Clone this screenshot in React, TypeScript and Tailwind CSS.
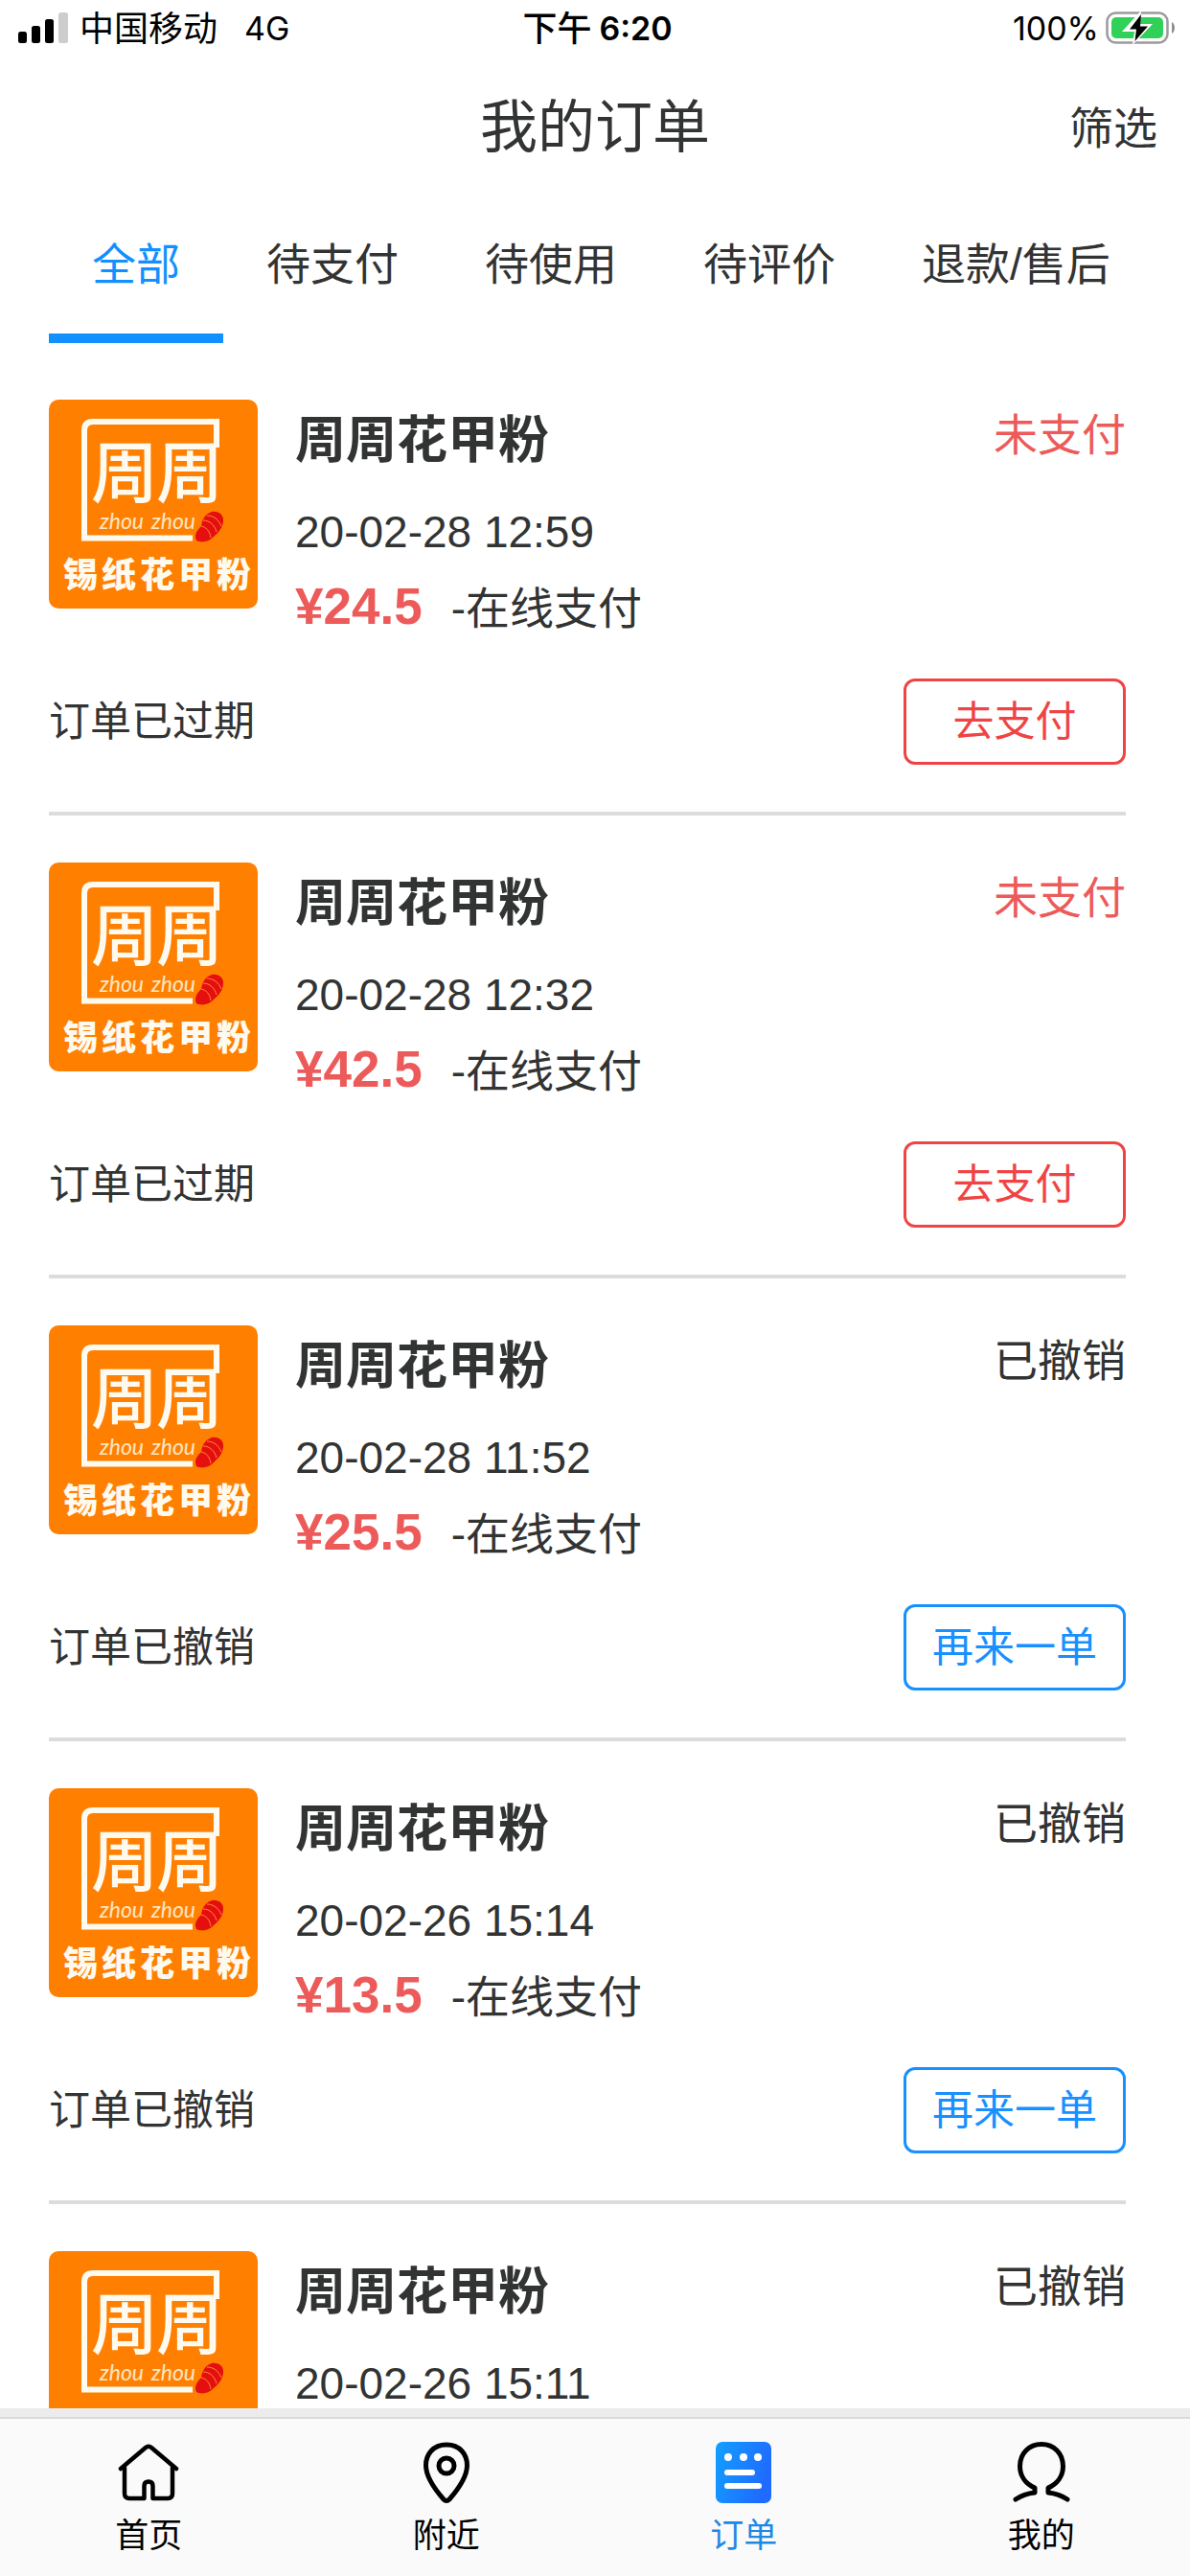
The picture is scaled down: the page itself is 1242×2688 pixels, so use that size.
import { useState } from 'react';
import clsx from 'clsx';

type Order = {
  id: number;
  time: string;
  price: string;
  state: 'unpaid' | 'cancelled';
};

const tabs = ['全部', '待支付', '待使用', '待评价', '退款/售后'];

const orders: Order[] = [
  { id: 1, time: '20-02-28 12:59', price: '24.5', state: 'unpaid' },
  { id: 2, time: '20-02-28 12:32', price: '42.5', state: 'unpaid' },
  { id: 3, time: '20-02-28 11:52', price: '25.5', state: 'cancelled' },
  { id: 4, time: '20-02-26 15:14', price: '13.5', state: 'cancelled' },
  { id: 5, time: '20-02-26 15:11', price: '13.5', state: 'cancelled' },
];

function StatusBar() {
  return (
    <div className="grid h-[60px] shrink-0 grid-cols-[1fr_auto_1fr] items-center pl-[19px] pr-[14px] font-['Inter','Noto_Sans_CJK_SC',sans-serif] text-[34px] leading-none text-black">
      <div className="flex items-center">
        <svg width="52" height="34" viewBox="0 0 52 34" aria-hidden="true">
          <rect x="0" y="20" width="9" height="12" rx="2.5" />
          <rect x="14" y="14" width="9" height="18" rx="2.5" />
          <rect x="28" y="7" width="9" height="25" rx="2.5" />
          <rect x="42" y="0" width="10" height="32" rx="2.5" fill="#cdcdcd" />
        </svg>
        <span className="ml-3 text-[36px]">中国移动</span>
        <span className="ml-7">4G</span>
      </div>
      <div className="flex items-center gap-2">
        <span className="text-[36px] font-medium">下午</span>
        <span className="font-semibold">6:20</span>
      </div>
      <div className="flex items-center justify-end gap-[7px]">
        <span>100%</span>
        <svg width="74" height="38" viewBox="0 0 74 38" aria-hidden="true">
          <rect x="1.5" y="2.5" width="63" height="31" rx="9" fill="#fff" stroke="#9b9b9b" strokeWidth="2.5" />
          <rect x="6" y="7" width="54" height="22" rx="5" fill="#2fd158" />
          <path d="M69 12c4 2 4 10 0 12z" fill="#8e8e8e" />
          <path d="M37 0 17 22h13l-2 14 21-22H36z" fill="#fff" />
          <path d="M37 4 25 19.500h7L30.500 32 44 16.500h-8z" fill="#000" />
        </svg>
      </div>
    </div>
  );
}

function ShopLogo() {
  return (
    <svg
      viewBox="0 0 218 218"
      role="img"
      aria-label="周周花甲粉"
      className="size-[218px] shrink-0 rounded-[10px] bg-[#ff8000]"
      fontFamily="'Noto Sans CJK SC', sans-serif"
      fill="#fffaf0"
    >
      <path
        d="M175 50V23H46q-9 0-9 9V144.500H150"
        fill="none"
        stroke="#fffaf0"
        strokeWidth="6"
      />
      <text x="79" y="102" fontSize="70" fontWeight="500" textAnchor="middle">周</text>
      <text x="147" y="102" fontSize="70" fontWeight="500" textAnchor="middle">周</text>
      <g fontFamily="Lato, sans-serif" fontSize="23" fontStyle="italic" fill="#ffe6c4" textAnchor="middle">
        <text x="76" y="135">zhou</text>
        <text x="130" y="135">zhou</text>
      </g>
      <path d="M154 147c-3-6 1-11 5-15 1-8 5-13 11-15 7-1 13 3 12 10-1 9-7 13-11 17-4 4-11 6-17 3z" fill="#e60f0f" />
      <path
        d="M159 132c5 1 9 5 10 12M161 126c7 0 12 5 14 12M165 121c7 0 12 4 15 11"
        fill="none"
        stroke="#ff8a3c"
        strokeWidth="1"
      />
      <g fontSize="36" fontWeight="900" textAnchor="middle">
        {['锡', '纸', '花', '甲', '粉'].map((char, i) => (
          <text key={char} x={33 + i * 40} y="196">{char}</text>
        ))}
      </g>
    </svg>
  );
}

function OrderItem({ order }: { order: Order }) {
  const unpaid = order.state === 'unpaid';

  return (
    <li className="mb-[49px] border-b-4 border-[#dcdcdc] pb-[49px]">
      <div className="flex">
        <ShopLogo />
        <div className="ml-[39px] flex-1">
          <h2 className="mb-3 text-[53px] font-bold leading-[86px]">周周花甲粉</h2>
          <p className="text-[46px] leading-[80px]">{order.time}</p>
          <p className="flex h-[80px] items-baseline gap-[30px] text-[46px] leading-[76px]">
            <strong className="text-[53px] font-bold text-[#ed5a5a]">¥{order.price}</strong>
            <span>-在线支付</span>
          </p>
        </div>
        <span className={clsx('text-[46px] leading-[74px]', unpaid && 'text-[#ed5a5a]')}>
          {unpaid ? '未支付' : '已撤销'}
        </span>
      </div>
      <div className="mt-[33px] flex items-center justify-between text-[43px] leading-none">
        <span>{unpaid ? '订单已过期' : '订单已撤销'}</span>
        <button
          className={clsx(
            'flex h-[90px] w-[232px] items-center justify-center rounded-xl border-3',
            unpaid ? 'border-[#f04444] text-[#f04444]' : 'border-[#1890ff] text-[#1890ff]'
          )}
        >
          {unpaid ? '去支付' : '再来一单'}
        </button>
      </div>
    </li>
  );
}

function HomeIcon() {
  return (
    <svg width="64" height="64" viewBox="0 0 64 64" fill="none" stroke="currentColor" strokeWidth="4.500" strokeLinecap="round" strokeLinejoin="round" aria-hidden="true">
      <path d="M3 28 29 6q3-2.500 6 0l26 22" />
      <path d="M7 27v27q0 5 5 5h15.500V46q0-4.500 4.500-4.500t4.500 4.500v13H52q5 0 5-5V27" />
    </svg>
  );
}

function PinIcon() {
  return (
    <svg width="64" height="64" viewBox="0 0 64 64" fill="none" stroke="currentColor" strokeWidth="5" aria-hidden="true">
      <path d="M32 3C18 3 10.500 13 10.500 24.500 10.500 37 22 52 29 60q3 3 6 0c7-8 18.500-23 18.500-35.500C53.500 13 46 3 32 3z" />
      <circle cx="32" cy="25" r="8" />
    </svg>
  );
}

function OrderIcon() {
  return (
    <svg width="64" height="64" viewBox="0 0 64 64" aria-hidden="true">
      <defs>
        <linearGradient id="orderFill" x1="0" y1="0" x2="1" y2="0.350">
          <stop offset="0" stopColor="#12a0ff" />
          <stop offset="1" stopColor="#1f6bff" />
        </linearGradient>
      </defs>
      <rect x="3" y="0" width="58" height="64" rx="7" fill="url(#orderFill)" />
      <g fill="#fff">
        <circle cx="16" cy="16" r="4" />
        <circle cx="32" cy="16" r="4" />
        <circle cx="47" cy="16" r="4" />
        <rect x="12" y="29" width="32" height="6" rx="3" />
        <rect x="12" y="43" width="39" height="6" rx="3" />
      </g>
    </svg>
  );
}

function UserIcon() {
  return (
    <svg width="64" height="64" viewBox="0 0 64 64" fill="none" stroke="currentColor" strokeWidth="5" strokeLinecap="round" strokeLinejoin="round" aria-hidden="true">
      <path d="M5 60c6-4 11-6 20-7v-5C16 44 9.500 36 9.500 25.500 9.500 12 19 2.500 32 2.500S54.500 12 54.500 25.500C54.500 36 48 44 39 48v5c9 1 14 3 20 7" />
    </svg>
  );
}

const navItems = [
  { label: '首页', icon: HomeIcon },
  { label: '附近', icon: PinIcon },
  { label: '订单', icon: OrderIcon },
  { label: '我的', icon: UserIcon },
];

export default function App() {
  const [tab, setTab] = useState('全部');
  const [page, setPage] = useState('订单');

  return (
    <div className="flex h-screen flex-col bg-white font-['Liberation_Sans','Noto_Sans_CJK_SC',sans-serif] text-[#323333]">
      <StatusBar />

      <header className="grid h-[148px] shrink-0 grid-cols-[1fr_auto_1fr] items-center pr-[34px]">
        <h1 className="col-start-2 ml-[34px] text-[60px] leading-none">我的订单</h1>
        <button className="justify-self-end text-[46px] leading-none">筛选</button>
      </header>

      <div className="flex h-[150px] shrink-0 pl-[51px]" role="tablist">
        {tabs.map((t) => (
          <button
            key={t}
            role="tab"
            aria-selected={t === tab}
            onClick={() => setTab(t)}
            className={clsx(
              'border-b-10 px-[45px] pb-1 text-[46px] leading-none',
              t === tab ? 'border-[#1290ff] text-[#1290ff]' : 'border-transparent'
            )}
          >
            {t}
          </button>
        ))}
      </div>

      <main className="min-h-0 flex-1 overflow-y-auto pl-[51px] pr-[67px] pt-[59px] [scrollbar-width:none]">
        <ul>
          {orders.map((order) => (
            <OrderItem key={order.id} order={order} />
          ))}
        </ul>
      </main>

      <div className="h-[11px] shrink-0 border-b-2 border-[#d9d9d9] bg-[#ececec]" />
      <nav className="grid h-[164px] shrink-0 grid-cols-4 bg-[#fafafa] text-black">
        {navItems.map(({ label, icon: Icon }) => (
          <button
            key={label}
            onClick={() => setPage(label)}
            className={clsx(
              'flex flex-col items-center gap-4 pt-6 text-[35px] leading-none',
              label === page && 'text-[#1e88e5]'
            )}
          >
            <Icon />
            {label}
          </button>
        ))}
      </nav>
    </div>
  );
}
